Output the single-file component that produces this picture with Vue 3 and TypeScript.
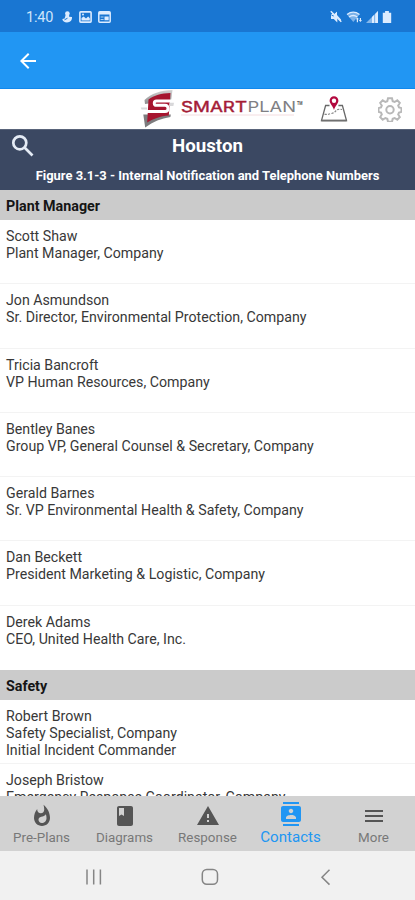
<script setup lang="ts">
interface Contact {
  name: string
  lines: string[]
}
interface Section {
  title: string
  contacts: Contact[]
}
interface Tab {
  label: string
  icon: string
  active?: boolean
}

const sections: Section[] = [
  {
    title: 'Plant Manager',
    contacts: [
      { name: 'Scott Shaw', lines: ['Plant Manager, Company'] },
      { name: 'Jon Asmundson', lines: ['Sr. Director, Environmental Protection, Company'] },
      { name: 'Tricia Bancroft', lines: ['VP Human Resources, Company'] },
      { name: 'Bentley Banes', lines: ['Group VP, General Counsel & Secretary, Company'] },
      { name: 'Gerald Barnes', lines: ['Sr. VP Environmental Health & Safety, Company'] },
      { name: 'Dan Beckett', lines: ['President Marketing & Logistic, Company'] },
      { name: 'Derek Adams', lines: ['CEO, United Health Care, Inc.'] },
    ],
  },
  {
    title: 'Safety',
    contacts: [
      { name: 'Robert Brown', lines: ['Safety Specialist, Company', 'Initial Incident Commander'] },
      { name: 'Joseph Bristow', lines: ['Emergency Response Coordinator, Company'] },
    ],
  },
]

const tabs: Tab[] = [
  {
    label: 'Pre-Plans',
    icon: 'M13.5.67s.74 2.65.74 4.8c0 2.06-1.35 3.73-3.41 3.73-2.07 0-3.63-1.67-3.63-3.73l.03-.36C5.21 7.51 4 10.62 4 14c0 4.42 3.58 8 8 8s8-3.58 8-8C20 8.61 17.41 3.8 13.5.67zM11.71 19c-1.78 0-3.22-1.4-3.22-3.14 0-1.62 1.05-2.76 2.81-3.12 1.77-.36 3.6-1.21 4.62-2.58.39 1.29.59 2.65.59 4.04 0 2.65-2.15 4.8-4.8 4.8z',
  },
  {
    label: 'Diagrams',
    icon: 'M18 2H6c-1.1 0-2 .9-2 2v16c0 1.1.9 2 2 2h12c1.1 0 2-.9 2-2V4c0-1.1-.9-2-2-2zM6 4h5v8l-2.5-1.5L6 12V4z',
  },
  { label: 'Response', icon: 'M1 21h22L12 2 1 21zm12-3h-2v-2h2v2zm0-4h-2v-4h2v4z' },
  {
    label: 'Contacts',
    icon: 'M20 0H4v2h16V0zM4 24h16v-2H4v2zM20 4H4c-1.1 0-2 .9-2 2v12c0 1.1.9 2 2 2h16c1.1 0 2-.9 2-2V6c0-1.1-.9-2-2-2zm-8 2.75c1.24 0 2.25 1.01 2.25 2.25s-1.01 2.25-2.25 2.25S9.75 10.24 9.75 9 10.76 6.75 12 6.75zM17 17H7v-1.5c0-1.67 3.33-2.5 5-2.5s5 .83 5 2.5V17z',
    active: true,
  },
  { label: 'More', icon: 'M3 18h18v-2H3v2zm0-5h18v-2H3v2zm0-7v2h18V6H3z' },
]
</script>

<template>
  <div class="screen">
    <header class="status">
      <div class="status-left">
        <span class="clock">1:40</span>
        <svg class="s-icon" viewBox="0 0 12 14">
          <circle cx="6.4" cy="3.6" r="2.3" fill="#dcecff" />
          <path d="M4.800 4.500h3.300v2.200l2.900.4c.2 3.300-1.700 5.400-5 5.400-2.600 0-4.400-1.400-4.700-3.500l2.300-.6z" fill="#dcecff" />
          <path d="M3.500 9.800l3-1.600" stroke="#1976d2" stroke-width="1" />
        </svg>
        <svg class="s-icon wide" viewBox="0 0 13 12">
          <rect x=".9" y=".9" width="11.2" height="10.2" rx=".8" fill="none" stroke="#dcecff" stroke-width="1.6" />
          <path d="M2.5 9.5V7l2.2-1.6L7 7.5l2.2-2 1.6 1.8v2.2z" fill="#dcecff" />
          <circle cx="4" cy="3.6" r="1" fill="#dcecff" />
        </svg>
        <svg class="s-icon wide last" viewBox="0 0 13 12">
          <rect x=".8" y=".8" width="11.4" height="10.4" rx="1" fill="none" stroke="#dcecff" stroke-width="1.5" />
          <path d="M1 1h11v2.600H1zM6.500 5.500h4.200v3.800H6.500z" fill="#dcecff" />
          <path d="M2.600 6h3M2.600 8.500h3" stroke="#a9cff5" />
        </svg>
      </div>
      <svg class="status-right" viewBox="0 0 64 16">
        <g fill="#dcecff">
          <path d="M2 6h2.500L8 2.700V6l4 4.500v2L3.800 4zM2 6v4h2.800l3.500 3.600V10z" />
          <path d="M4.500 6L8 2.700v8L4.500 8z" />
          <path d="M1.800 2.200l10.500 10.500" stroke="#dcecff" stroke-width="1.500" />
          <path d="M18 5.500a10 10 0 0 1 12.500 0L24.300 13z" opacity=".5" />
          <path d="M18 5.400q6.200-4.600 12.500 0M20 8q4.200-3 8.300 0" fill="none" stroke="#dcecff" stroke-width="1.300" />
          <path d="M26.700 10.300l1.700-1.800 1.600 1.800h-1v3h-1.200v-3zM29.800 11h1v-2h1.200v2h1l-1.600 2z" />
          <path d="M37 14L49 2v12z" opacity=".55" />
          <path d="M43 8l2-2v8h-2zM46.200 5L49 2v12h-2.800z" />
          <path d="M53.800 3.800h2.300V2h3.800v1.800h2.300V14h-8.400z" />
        </g>
      </svg>
    </header>

    <nav class="appbar">
      <svg class="back" viewBox="0 0 24 24"><path d="M20 11H7.8l5.6-5.6L12 4l-8 8 8 8 1.4-1.4L7.8 13H20z" /></svg>
    </nav>

    <div class="brand">
      <svg class="logo" viewBox="0 0 164 40">
        <defs>
          <linearGradient id="edge" x1="0" y1="0" x2="0" y2="1">
            <stop offset="0" stop-color="#d4d4d4" />
            <stop offset="1" stop-color="#8a8a8c" />
          </linearGradient>
        </defs>
        <path d="M4.500 11C11 4.500 21 1.200 32.500 1L31 12h-5L5 15z" fill="url(#edge)" />
        <path d="M3.300 25.500h27.500l-.4 2.500C21 29.500 13.500 32.500 5.200 38.500z" fill="#7c7c7e" />
        <path d="M8.500 10.500C14 6.300 21.500 4.300 30.500 4L28.800 26.500C20.500 27 12.500 30 7.200 33.500z" fill="#a6152f" />
        <path d="M34 12H16.500c-3 0-3 4.300 0 4.300h8.500c4 0 4 6.200 0 6.200H1.200" fill="none" stroke="#fff" stroke-width="2.900" />
        <path d="M29.500 13.800h4.500l-.6 3.200h-4.200zM.8 18.500h6.500l-.3 2H1.500z" fill="#d8d8da" />
        <path d="M41 26h113" stroke="#f3dde0" stroke-width="1" />
        <text x="41" y="23.300" textLength="66" lengthAdjust="spacingAndGlyphs" class="word red">SMART</text>
        <text x="107.500" y="23.300" textLength="48.500" lengthAdjust="spacingAndGlyphs" class="word grey">PLAN</text>
        <text x="157" y="16" textLength="5.500" lengthAdjust="spacingAndGlyphs" class="tm">TM</text>
      </svg>
      <svg class="map" viewBox="0 0 28 28">
        <path d="M9.500 10.500H5.600L1.500 25.700h25L22.400 10.500h-4" fill="none" stroke="#686868" stroke-width="1.300" />
        <path d="M4.500 19.200c3 .8 4.500-.4 7-.7 4.500-.6 4-4.500 7.500-4.200l3 .2" fill="none" stroke="#888" stroke-width="1.200" stroke-dasharray="2.200 1.300" />
        <path d="M1.300 25.500h25.400" stroke="#707070" stroke-width="1.800" />
        <path d="M14 1.300a4.400 4.400 0 0 0-4.400 4.400c0 2.800 3.300 5.200 4.400 9.300 1.100-4.100 4.400-6.500 4.400-9.300A4.400 4.400 0 0 0 14 1.300z" fill="#b3093f" />
        <circle cx="14" cy="5.700" r="2.200" fill="#fff" />
      </svg>
      <svg class="gear" viewBox="0 0 24 25">
        <path d="M10 1.200h4l.7 3 1.900.8 2.700-1.700 2.500 2.600-1.600 2.700.8 1.900 2.500.6v3.800l-2.500.6-.8 1.900 1.600 2.700-2.500 2.600-2.700-1.700-1.900.8-.7 3h-4l-.7-3-1.900-.8-2.700 1.700-2.500-2.600 1.600-2.700-.8-1.900-2.500-.6v-3.800L3 10.500l.8-1.900-1.600-2.700 2.500-2.600L7.400 5l1.900-.8z" />
        <circle cx="12" cy="12.700" r="3.700" />
      </svg>
    </div>

    <div class="title">
      <div class="title-row">
        <svg class="search" viewBox="0 0 24 24"><circle cx="8.800" cy="8.800" r="6.500" /><path d="M13.500 13.500l8 8" /></svg>
        <h1>Houston</h1>
      </div>
      <p>Figure 3.1-3 - Internal Notification and Telephone Numbers</p>
    </div>

    <main class="list">
      <section v-for="section in sections" :key="section.title">
        <h2>{{ section.title }}</h2>
        <div v-for="contact in section.contacts" :key="contact.name" class="contact">
          <div>{{ contact.name }}</div>
          <div v-for="line in contact.lines" :key="line">{{ line }}</div>
        </div>
      </section>
    </main>

    <nav class="tabs">
      <div v-for="tab in tabs" :key="tab.label" class="tab" :class="{ active: tab.active }">
        <svg viewBox="0 0 24 24"><path :d="tab.icon" /></svg>
        <span>{{ tab.label }}</span>
      </div>
    </nav>

    <footer class="system">
      <svg viewBox="0 0 18 18"><path d="M2 1.500v15M8.700 1.500v15M15.400 1.500v15" /></svg>
      <svg viewBox="0 0 18 18"><rect x="1.300" y="1.500" width="15.200" height="14.800" rx="4.500" /></svg>
      <svg viewBox="0 0 18 18"><path d="M12.500 1.800L5 9.200l7.500 7.400" /></svg>
    </footer>
  </div>
</template>

<style>
body {
  margin: 0;
  background: #fff;
}
</style>

<style scoped>
.screen {
  display: flex;
  flex-direction: column;
  width: 415px;
  height: 900px;
  overflow: hidden;
  background: #fff;
  font-family: Roboto, "Liberation Sans", sans-serif;
  color: #383838;
}
.screen > * {
  box-sizing: border-box;
  flex: none;
}
.status {
  display: flex;
  justify-content: space-between;
  align-items: center;
  height: 32px;
  padding: 2px 22px 0 26px;
  background: #1976d2;
}
.status-left {
  display: flex;
  align-items: center;
}
.clock {
  width: 35px;
  font-size: 14.5px;
  letter-spacing: -0.2px;
  color: #cfe5fb;
}
.s-icon {
  width: 12px;
  height: 14px;
}
.s-icon.wide {
  width: 13px;
  height: 12px;
  margin-left: 6px;
}
.status-right {
  width: 64px;
  height: 16px;
}
.appbar {
  display: flex;
  align-items: center;
  height: 57px;
  padding: 1px 0 0 16px;
  background: #2196f3;
  border-bottom: 1px solid #1088ee;
}
.back {
  width: 24px;
  height: 24px;
  fill: #fff;
}
.brand {
  display: flex;
  align-items: center;
  height: 40px;
  padding-left: 140px;
  background: #fff;
}
.logo {
  width: 164px;
  height: 40px;
}
.word {
  font-family: Inter, sans-serif;
  font-size: 14.3px;
}
.red {
  fill: #a51c36;
  stroke: #a51c36;
  stroke-width: 0.4px;
}
.grey {
  fill: #808084;
}
.tm {
  font-size: 4.5px;
  font-weight: 700;
  fill: #555;
}
.map {
  width: 28px;
  height: 28px;
  margin-left: 16px;
}
.gear {
  width: 24px;
  height: 25px;
  margin-left: 30px;
  fill: none;
  stroke: #b8b8b8;
  stroke-width: 2px;
}
.title {
  height: 61px;
  background: #3b4862;
  border-top: 1px solid #59647a;
  color: #fff;
  text-align: center;
}
.title-row {
  display: grid;
  grid-template-columns: 34px 1fr 34px;
  align-items: center;
  height: 31px;
}
.search {
  width: 24px;
  height: 24px;
  margin-left: 11px;
  fill: none;
  stroke: #e4ebf5;
  stroke-width: 2.7px;
}
h1 {
  margin: 0;
  font-size: 18.7px;
  line-height: 22px;
  font-weight: 700;
}
.title p {
  margin: 6px 0 0;
  font-size: 12.95px;
  line-height: 18px;
  font-weight: 700;
  white-space: nowrap;
}
.list {
  height: 606px;
  overflow: hidden;
}
h2 {
  box-sizing: border-box;
  height: 30px;
  margin: 0;
  padding: 0 6px;
  background: #cbcbcb;
  font-size: 14.3px;
  font-weight: 700;
  line-height: 32px;
  color: #151515;
}
.contact {
  box-sizing: border-box;
  height: 64.28px;
  padding: 8px 6px 0;
  border-bottom: 1px solid #f3f3f3;
  font-size: 14.2px;
  line-height: 17.1px;
  white-space: nowrap;
}
.contact:last-child {
  border-bottom: 0;
}
.tabs {
  display: grid;
  grid-template-columns: repeat(5, 1fr);
  height: 55px;
  background: #d2d2d2;
}
.tab {
  display: flex;
  flex-direction: column;
  align-items: center;
  padding-top: 8px;
  font-size: 13.4px;
  line-height: 16px;
  color: #787878;
}
.tab svg {
  width: 24px;
  height: 24px;
  margin-bottom: 2px;
  fill: #555;
}
.tab.active {
  padding-top: 6px;
  font-size: 15.1px;
  color: #2196f3;
}
.tab.active svg {
  margin-bottom: 3px;
  fill: #2196f3;
}
.system {
  display: flex;
  align-items: center;
  justify-content: space-between;
  height: 49px;
  padding: 2px 80px 0 85px;
  background: #f1f1f1;
}
.system svg {
  width: 18px;
  height: 18px;
  fill: none;
  stroke: #858585;
  stroke-width: 1.5px;
}
</style>
